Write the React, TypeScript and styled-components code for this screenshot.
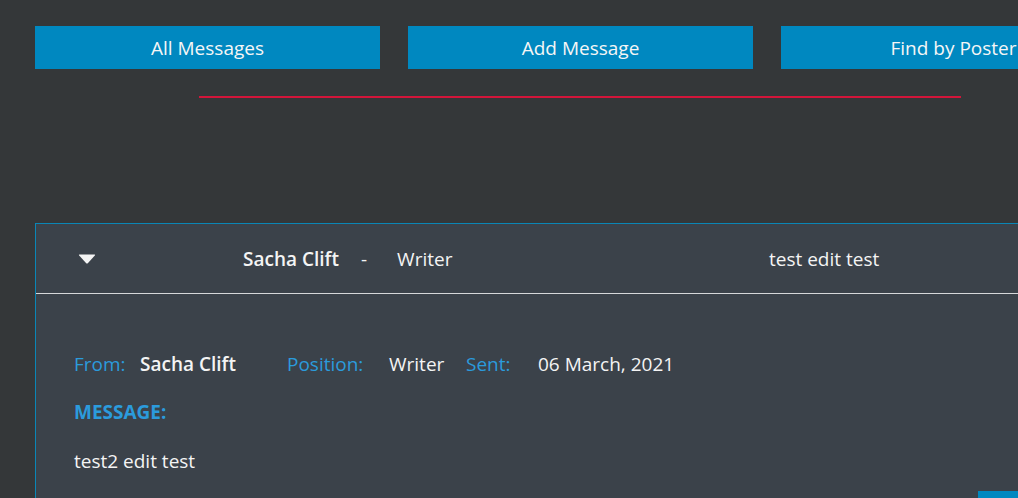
import React from "react";
import styled, { createGlobalStyle } from "styled-components";

const Global = createGlobalStyle`
  html, body {
    margin: 0;
    padding: 0;
    background: #343739;
    overflow: hidden;
  }
  body {
    font-family: "Open Sans", "Noto Sans", Arial, sans-serif;
    color: #f4f4f4;
  }
`;

const Page = styled.div`
  width: 1018px;
  height: 498px;
  padding-left: 35px;
  box-sizing: border-box;
  overflow: hidden;
`;

const Nav = styled.nav`
  display: flex;
  gap: 28px;
  padding-top: 26px;
`;

const NavButton = styled.button`
  flex: 0 0 345px;
  height: 43px;
  border: none;
  background: #0088c0;
  color: #f6f6f6;
  font-family: inherit;
  font-size: 19px;
  padding: 0;
  cursor: pointer;
`;

const Rule = styled.hr`
  margin: 27px 0 0 164px;
  width: 762px;
  height: 2px;
  border: none;
  background: #d3153a;
`;

const Card = styled.section`
  margin-top: 125px;
  width: 1090px;
  background: #3b424a;
  border-top: 1px solid #0a86b6;
  border-left: 1px solid #0a86b6;
`;

const Header = styled.div`
  display: grid;
  grid-template-columns: 207px 526px 1fr;
  align-items: center;
  height: 69px;
  border-bottom: 1px solid #d6d8da;
  font-size: 19px;
`;

const Toggle = styled.div`
  display: flex;
  align-items: center;
  padding-left: 42px;
`;

const Poster = styled.div`
  display: flex;
  align-items: center;
`;

const Name = styled.span`
  font-weight: 600;
`;

const Dash = styled.span`
  margin: 0 30px 0 22px;
`;

const Body = styled.div`
  padding: 58px 0 0 38px;
  font-size: 19px;
`;

const MetaRow = styled.div`
  display: grid;
  grid-template-columns: 66px 147px 102px 77px 72px auto;
  line-height: 24px;
`;

const Label = styled.span<{ $bold?: boolean }>`
  color: #2b9bdc;
  font-weight: ${(p) => (p.$bold ? 700 : 400)};
`;

const Value = styled.span<{ $bold?: boolean }>`
  font-weight: ${(p) => (p.$bold ? 600 : 400)};
`;

const Block = styled.div<{ $gap: number }>`
  margin-top: ${(p) => p.$gap}px;
  line-height: 24px;
`;

const Actions = styled.div`
  display: flex;
  padding-left: 904px;
  margin-top: 18px;
`;

const ActionButton = styled.button`
  width: 100px;
  height: 40px;
  border: none;
  background: #0088c0;
`;

const Caret = () => (
  <svg width="18" height="10" viewBox="0 0 18 10">
    <path d="M1.5 0.5 H16.5 Q17.6 0.5 16.8 1.4 L9.8 9.2 Q9 10 8.2 9.2 L1.2 1.4 Q0.4 0.5 1.5 0.5 Z" fill="#f4f4f4" />
  </svg>
);

export default function App() {
  return (
    <>
      <Global />
      <Page>
        <Nav>
          <NavButton>All Messages</NavButton>
          <NavButton>Add Message</NavButton>
          <NavButton>Find by Poster</NavButton>
        </Nav>
        <Rule />
        <Card>
          <Header>
            <Toggle>
              <Caret />
            </Toggle>
            <Poster>
              <Name>Sacha Clift</Name>
              <Dash>-</Dash>
              <span>Writer</span>
            </Poster>
            <span>test edit test</span>
          </Header>
          <Body>
            <MetaRow>
              <Label>From:</Label>
              <Value $bold>Sacha Clift</Value>
              <Label>Position:</Label>
              <Value>Writer</Value>
              <Label>Sent:</Label>
              <Value>06 March, 2021</Value>
            </MetaRow>
            <Block $gap={24}>
              <Label $bold>MESSAGE:</Label>
            </Block>
            <Block $gap={25}>test2 edit test</Block>
            <Actions>
              <ActionButton aria-label="Edit message" />
            </Actions>
          </Body>
        </Card>
      </Page>
    </>
  );
}
